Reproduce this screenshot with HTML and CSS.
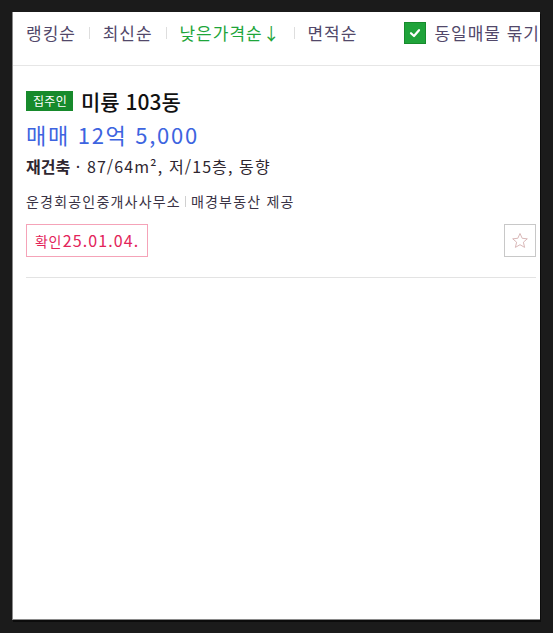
FILE: index.html
```html
<!DOCTYPE html>
<html lang="ko">
<head>
<meta charset="utf-8">
<link rel="stylesheet" href="styles.css">
</head>
<body>
<div class="panel">
  <div class="sortbar">
    <span class="sort">랭킹순</span>
    <span class="sep"></span>
    <span class="sort">최신순</span>
    <span class="sep"></span>
    <span class="sort active">낮은가격순↓</span>
    <span class="sep"></span>
    <span class="sort">면적순</span>
    <label class="group">
      <span class="check"><svg width="14" height="14" viewBox="0 0 14 14"><path d="M3 7.2 L6 10 L11 4.2" fill="none" stroke="#fff" stroke-width="2.2" stroke-linecap="round" stroke-linejoin="round"/></svg></span>
      <span class="grouptext">동일매물 묶기</span>
    </label>
  </div>
  <div class="item">
    <div class="titlerow">
      <span class="owner">집주인</span>
      <span class="title">미륭 103동</span>
    </div>
    <div class="price">매매 12억 5,000</div>
    <div class="spec"><strong>재건축</strong> · 87/64m², 저/15층, 동향</div>
    <div class="agent"><span>운경회공인중개사사무소</span><span class="asep"></span><span>매경부동산 제공</span></div>
    <div class="bottomrow">
      <span class="confirm"><span class="cl">확인</span>25.01.04.</span>
      <button class="star"><svg width="20" height="20" viewBox="0 0 20 20"><path d="M10 2.5 L12.2 7.3 L17.3 7.8 L13.4 11.2 L14.6 16.4 L10 13.7 L5.4 16.4 L6.6 11.2 L2.7 7.8 L7.8 7.3 Z" fill="none" stroke="#d9b8b8" stroke-width="1"/></svg></button>
    </div>
  </div>
</div>
</body>
</html>
```

FILE: styles.css
```css
* { box-sizing: border-box; }
html, body { margin: 0; padding: 0; }
body {
  background: #1b1b1b;
  width: 553px;
  height: 633px;
  padding: 12px 0 0 12px;
  font-family: "Noto Sans CJK KR", "Noto Sans", sans-serif;
  overflow: hidden;
}
.panel {
  width: 528px;
  height: 608px;
  background: #fff;
  overflow: hidden;
  border-left: 1px solid #8a8a8a;
  border-bottom: 1px solid #8a8a8a;
  box-shadow: 1px 2px 0 #0c0c0c;
}
.sortbar {
  height: 54px;
  border-bottom: 1px solid #e6e6e6;
  display: flex;
  align-items: center;
  padding: 0 0 12px 13px;
  white-space: nowrap;
  font-size: 17px;
  letter-spacing: 1px;
  color: #52486a;
}
.sort { line-height: 20px; }
.sort.active { color: #1ea53a; }
.sep {
  width: 1px;
  height: 12px;
  background: #dedede;
  margin: 0 13px 0 13px;
}
.group {
  display: flex;
  align-items: center;
  margin-left: 47px;
  flex-shrink: 0;
}
.check {
  width: 22px;
  height: 22px;
  background: #1fa33a;
  border: 1px solid #178a2c;
  display: flex;
  align-items: center;
  justify-content: center;
  margin-right: 8px;
}
.check svg { display: block; }
.grouptext { line-height: 20px; }
.item {
  padding: 24px 4px 0 13px;
}
.titlerow {
  display: flex;
  align-items: center;
  height: 22px;
}
.owner {
  background: #178a2c;
  color: #fff;
  font-size: 12px;
  line-height: 20px;
  height: 20px;
  padding: 0 6px 0 7px;
  letter-spacing: 0.3px;
  margin-right: 8px;
}
.title {
  font-size: 21px;
  font-weight: 500;
  color: #111;
  line-height: 22px;
  letter-spacing: 0;
}
.price {
  margin-top: 9px;
  font-size: 22px;
  color: #3d64e0;
  line-height: 26px;
  letter-spacing: 1.7px;
}
.spec {
  margin-top: 8px;
  font-size: 16px;
  color: #2e2630;
  line-height: 22px;
  letter-spacing: 1.1px;
}
.spec strong { font-weight: 700; letter-spacing: 0; }
.agent {
  margin-top: 15px;
  font-size: 14px;
  color: #3a3345;
  line-height: 18px;
  letter-spacing: 1.2px;
  display: flex;
  align-items: center;
}
.asep {
  width: 1px;
  height: 11px;
  background: #d0d0d0;
  margin: 0 5px 0 4px;
}
.bottomrow {
  margin-top: 14px;
  display: flex;
  align-items: center;
  justify-content: space-between;
  padding-bottom: 20px;
  border-bottom: 1px solid #e3e3e3;
}
.confirm {
  border: 1px solid #f5a3b8;
  color: #e3245a;
  font-size: 16px;
  height: 33px;
  line-height: 31px;
  padding: 0 8px;
  letter-spacing: 1.1px;
}
.confirm .cl { margin-right: 1px; font-size: 14px; letter-spacing: 0.5px; }
.star {
  width: 32px;
  height: 33px;
  border: 1px solid #c8c8c8;
  background: #fff;
  padding: 0;
  display: flex;
  align-items: center;
  justify-content: center;
}
```
